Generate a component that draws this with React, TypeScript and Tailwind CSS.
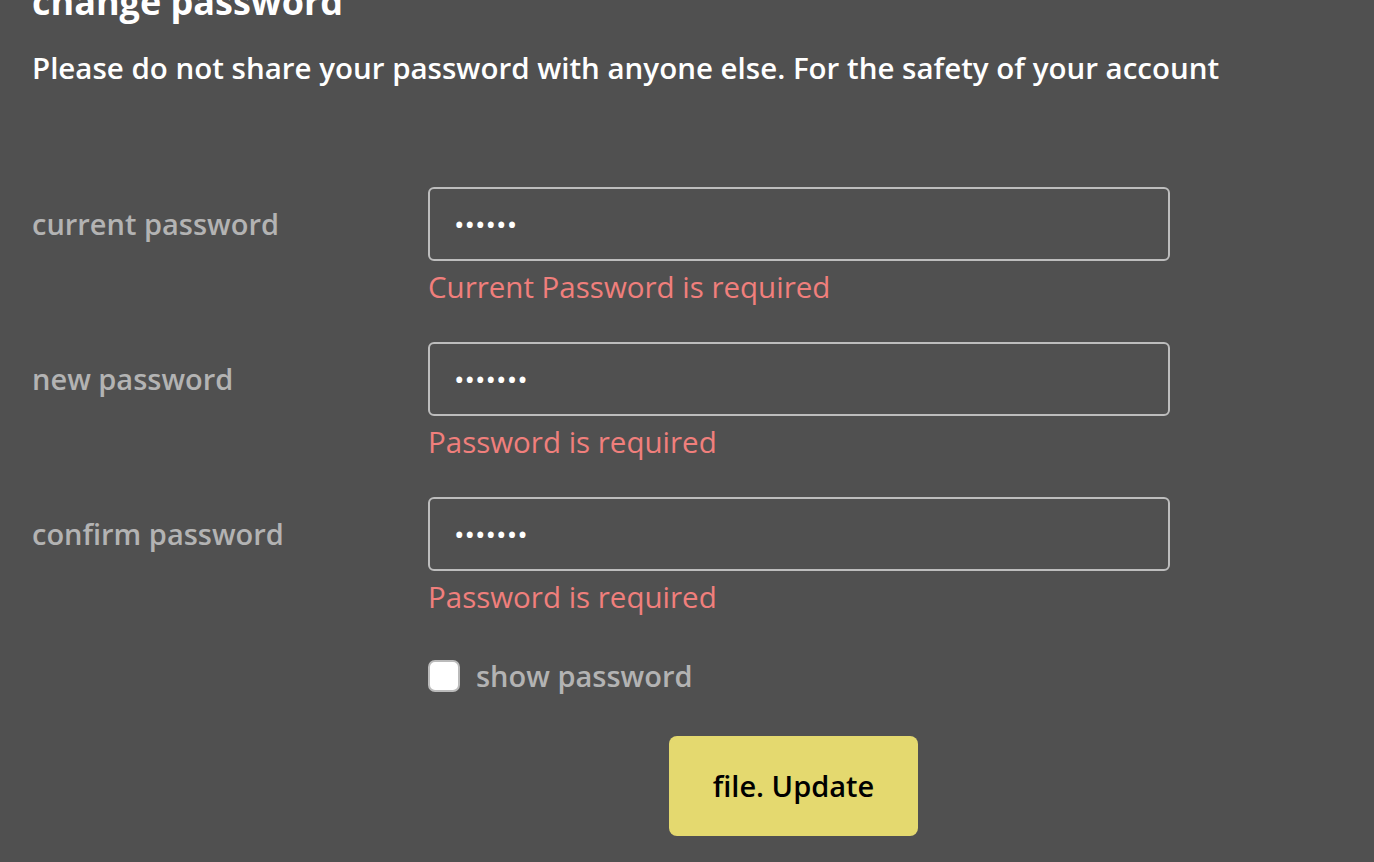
import React, { useState } from 'react';

const fields = [
  { label: 'current password', value: '123456', error: 'Current Password is required' },
  { label: 'new password', value: '1234567', error: 'Password is required' },
  { label: 'confirm password', value: '1234567', error: 'Password is required' },
];

export default function App() {
  const [show, setShow] = useState(false);

  return (
    <div
      className="min-h-[862px] w-full bg-[#505050] overflow-hidden"
      style={{ fontFamily: '"Open Sans", "Noto Sans", sans-serif' }}
    >
      <div className="pl-8 pr-8">
        <h1 className="-mt-[22px] text-[36px] font-bold leading-[48px] text-white">change password</h1>
        <p className="mt-[24px] text-[29.5px] font-semibold leading-[36px] text-white">
          Please do not share your password with anyone else. For the safety of your account
        </p>

        {/* Form */}
        <div className="mt-[101px] flex flex-col gap-[20px]">
          {fields.map((f) => (
            <div key={f.label} className="grid grid-cols-[396px_742px]">
              <label className="flex h-[74px] items-center text-[29px] font-semibold text-[#b3b3b3]">
                {f.label}
              </label>
              <div>
                <input
                  type={show ? 'text' : 'password'}
                  defaultValue={f.value}
                  className="h-[74px] w-full rounded-[6px] border-2 border-[#bdbdbd] bg-transparent px-6 text-[28px] text-white outline-none"
                />
                <div className="mt-[8px] h-[53px] text-[29.5px] font-medium leading-[36px] text-[#f07f7c]">
                  {f.error}
                </div>
              </div>
            </div>
          ))}
        </div>

        <div className="mt-[24px] grid grid-cols-[396px_742px]">
          <div />
          <label className="flex h-[40px] items-center gap-4">
            <input
              type="checkbox"
              checked={show}
              onChange={(e) => setShow(e.target.checked)}
              className="h-8 w-8 appearance-none rounded-[7px] border-2 border-[#bbbbbb] bg-white"
            />
            <span className="text-[29px] font-semibold text-[#b3b3b3]">show password</span>
          </label>
        </div>

        <div className="mt-[40px] flex justify-start pl-[637px]">
          <button className="h-[100px] w-[249px] rounded-[8px] bg-[#e4d96f] text-[29px] font-semibold text-black">
            file. Update
          </button>
        </div>
      </div>
    </div>
  );
}
